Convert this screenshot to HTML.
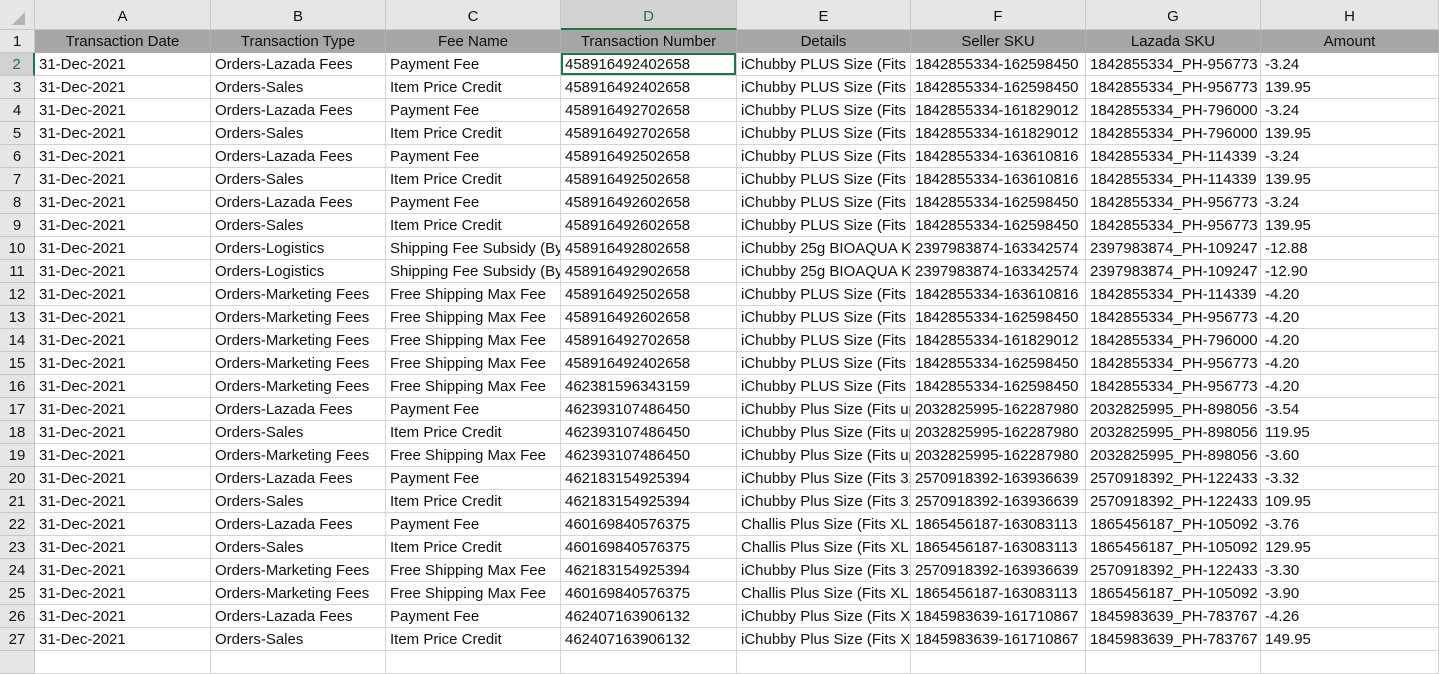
<!DOCTYPE html>
<html><head><meta charset="utf-8"><style>
body{margin:0;width:1439px;height:656px;overflow:hidden;background:#fff;font-family:"Liberation Sans",sans-serif;font-size:15px;color:#111}
.r{position:absolute;left:0;width:1439px;height:23px;display:flex}
.r div{box-sizing:border-box;height:23px;border-right:1px solid #d4d4d4;border-bottom:1px solid #d4d4d4;white-space:nowrap;overflow:hidden;padding:0 0 0 4px;line-height:23px}
.r div:nth-child(1){width:35px;background:#e6e6e6;text-align:center;padding:0;border-color:#c6c6c6}
.r div:nth-child(2){width:176px}.r div:nth-child(3){width:175px}.r div:nth-child(4){width:175px}.r div:nth-child(5){width:176px}.r div:nth-child(6){width:174px}.r div:nth-child(7){width:175px}.r div:nth-child(8){width:175px}.r div:nth-child(9){width:178px}
.ch{top:0;height:30px}.ch div{height:30px;line-height:34px;background:#e6e6e6;text-align:center;border-color:#c6c6c6;padding:0}
.ch div.sel{background:#d2d2d2;color:#217346;border-bottom:2px solid #217346}
.h div{background:#a6a6a6;text-align:center;border-color:#b0b0b0;padding:0}
.act{box-shadow:inset 0 0 0 2px #217346}
.rsel{color:#217346;background:#d2d2d2!important;border-right:2px solid #217346!important}
</style></head><body>
<div class="r ch"><div><svg width="34" height="30"><polygon points="25,12 25,25 12,25" fill="#b4b4b4"/></svg></div><div>A</div><div>B</div><div>C</div><div class="sel">D</div><div>E</div><div>F</div><div>G</div><div>H</div></div>
<div class="r h" style="top:30px"><div>1</div><div>Transaction Date</div><div>Transaction Type</div><div>Fee Name</div><div>Transaction Number</div><div>Details</div><div>Seller SKU</div><div>Lazada SKU</div><div>Amount</div></div>
<div class="r" style="top:53px"><div class="rsel">2</div><div>31-Dec-2021</div><div>Orders-Lazada Fees</div><div>Payment Fee</div><div class="act">458916492402658</div><div>iChubby PLUS Size (Fits up</div><div>1842855334-162598450</div><div>1842855334_PH-956773</div><div>-3.24</div></div>
<div class="r" style="top:76px"><div>3</div><div>31-Dec-2021</div><div>Orders-Sales</div><div>Item Price Credit</div><div>458916492402658</div><div>iChubby PLUS Size (Fits up</div><div>1842855334-162598450</div><div>1842855334_PH-956773</div><div>139.95</div></div>
<div class="r" style="top:99px"><div>4</div><div>31-Dec-2021</div><div>Orders-Lazada Fees</div><div>Payment Fee</div><div>458916492702658</div><div>iChubby PLUS Size (Fits up</div><div>1842855334-161829012</div><div>1842855334_PH-796000</div><div>-3.24</div></div>
<div class="r" style="top:122px"><div>5</div><div>31-Dec-2021</div><div>Orders-Sales</div><div>Item Price Credit</div><div>458916492702658</div><div>iChubby PLUS Size (Fits up</div><div>1842855334-161829012</div><div>1842855334_PH-796000</div><div>139.95</div></div>
<div class="r" style="top:145px"><div>6</div><div>31-Dec-2021</div><div>Orders-Lazada Fees</div><div>Payment Fee</div><div>458916492502658</div><div>iChubby PLUS Size (Fits up</div><div>1842855334-163610816</div><div>1842855334_PH-114339</div><div>-3.24</div></div>
<div class="r" style="top:168px"><div>7</div><div>31-Dec-2021</div><div>Orders-Sales</div><div>Item Price Credit</div><div>458916492502658</div><div>iChubby PLUS Size (Fits up</div><div>1842855334-163610816</div><div>1842855334_PH-114339</div><div>139.95</div></div>
<div class="r" style="top:191px"><div>8</div><div>31-Dec-2021</div><div>Orders-Lazada Fees</div><div>Payment Fee</div><div>458916492602658</div><div>iChubby PLUS Size (Fits up</div><div>1842855334-162598450</div><div>1842855334_PH-956773</div><div>-3.24</div></div>
<div class="r" style="top:214px"><div>9</div><div>31-Dec-2021</div><div>Orders-Sales</div><div>Item Price Credit</div><div>458916492602658</div><div>iChubby PLUS Size (Fits up</div><div>1842855334-162598450</div><div>1842855334_PH-956773</div><div>139.95</div></div>
<div class="r" style="top:237px"><div>10</div><div>31-Dec-2021</div><div>Orders-Logistics</div><div>Shipping Fee Subsidy (By</div><div>458916492802658</div><div>iChubby 25g BIOAQUA K</div><div>2397983874-163342574</div><div>2397983874_PH-109247</div><div>-12.88</div></div>
<div class="r" style="top:260px"><div>11</div><div>31-Dec-2021</div><div>Orders-Logistics</div><div>Shipping Fee Subsidy (By</div><div>458916492902658</div><div>iChubby 25g BIOAQUA K</div><div>2397983874-163342574</div><div>2397983874_PH-109247</div><div>-12.90</div></div>
<div class="r" style="top:283px"><div>12</div><div>31-Dec-2021</div><div>Orders-Marketing Fees</div><div>Free Shipping Max Fee</div><div>458916492502658</div><div>iChubby PLUS Size (Fits up</div><div>1842855334-163610816</div><div>1842855334_PH-114339</div><div>-4.20</div></div>
<div class="r" style="top:306px"><div>13</div><div>31-Dec-2021</div><div>Orders-Marketing Fees</div><div>Free Shipping Max Fee</div><div>458916492602658</div><div>iChubby PLUS Size (Fits up</div><div>1842855334-162598450</div><div>1842855334_PH-956773</div><div>-4.20</div></div>
<div class="r" style="top:329px"><div>14</div><div>31-Dec-2021</div><div>Orders-Marketing Fees</div><div>Free Shipping Max Fee</div><div>458916492702658</div><div>iChubby PLUS Size (Fits up</div><div>1842855334-161829012</div><div>1842855334_PH-796000</div><div>-4.20</div></div>
<div class="r" style="top:352px"><div>15</div><div>31-Dec-2021</div><div>Orders-Marketing Fees</div><div>Free Shipping Max Fee</div><div>458916492402658</div><div>iChubby PLUS Size (Fits up</div><div>1842855334-162598450</div><div>1842855334_PH-956773</div><div>-4.20</div></div>
<div class="r" style="top:375px"><div>16</div><div>31-Dec-2021</div><div>Orders-Marketing Fees</div><div>Free Shipping Max Fee</div><div>462381596343159</div><div>iChubby PLUS Size (Fits up</div><div>1842855334-162598450</div><div>1842855334_PH-956773</div><div>-4.20</div></div>
<div class="r" style="top:398px"><div>17</div><div>31-Dec-2021</div><div>Orders-Lazada Fees</div><div>Payment Fee</div><div>462393107486450</div><div>iChubby Plus Size (Fits up</div><div>2032825995-162287980</div><div>2032825995_PH-898056</div><div>-3.54</div></div>
<div class="r" style="top:421px"><div>18</div><div>31-Dec-2021</div><div>Orders-Sales</div><div>Item Price Credit</div><div>462393107486450</div><div>iChubby Plus Size (Fits up</div><div>2032825995-162287980</div><div>2032825995_PH-898056</div><div>119.95</div></div>
<div class="r" style="top:444px"><div>19</div><div>31-Dec-2021</div><div>Orders-Marketing Fees</div><div>Free Shipping Max Fee</div><div>462393107486450</div><div>iChubby Plus Size (Fits up</div><div>2032825995-162287980</div><div>2032825995_PH-898056</div><div>-3.60</div></div>
<div class="r" style="top:467px"><div>20</div><div>31-Dec-2021</div><div>Orders-Lazada Fees</div><div>Payment Fee</div><div>462183154925394</div><div>iChubby Plus Size (Fits 3X</div><div>2570918392-163936639</div><div>2570918392_PH-122433</div><div>-3.32</div></div>
<div class="r" style="top:490px"><div>21</div><div>31-Dec-2021</div><div>Orders-Sales</div><div>Item Price Credit</div><div>462183154925394</div><div>iChubby Plus Size (Fits 3X</div><div>2570918392-163936639</div><div>2570918392_PH-122433</div><div>109.95</div></div>
<div class="r" style="top:513px"><div>22</div><div>31-Dec-2021</div><div>Orders-Lazada Fees</div><div>Payment Fee</div><div>460169840576375</div><div>Challis Plus Size (Fits XL to</div><div>1865456187-163083113</div><div>1865456187_PH-105092</div><div>-3.76</div></div>
<div class="r" style="top:536px"><div>23</div><div>31-Dec-2021</div><div>Orders-Sales</div><div>Item Price Credit</div><div>460169840576375</div><div>Challis Plus Size (Fits XL to</div><div>1865456187-163083113</div><div>1865456187_PH-105092</div><div>129.95</div></div>
<div class="r" style="top:559px"><div>24</div><div>31-Dec-2021</div><div>Orders-Marketing Fees</div><div>Free Shipping Max Fee</div><div>462183154925394</div><div>iChubby Plus Size (Fits 3X</div><div>2570918392-163936639</div><div>2570918392_PH-122433</div><div>-3.30</div></div>
<div class="r" style="top:582px"><div>25</div><div>31-Dec-2021</div><div>Orders-Marketing Fees</div><div>Free Shipping Max Fee</div><div>460169840576375</div><div>Challis Plus Size (Fits XL to</div><div>1865456187-163083113</div><div>1865456187_PH-105092</div><div>-3.90</div></div>
<div class="r" style="top:605px"><div>26</div><div>31-Dec-2021</div><div>Orders-Lazada Fees</div><div>Payment Fee</div><div>462407163906132</div><div>iChubby Plus Size (Fits XL</div><div>1845983639-161710867</div><div>1845983639_PH-783767</div><div>-4.26</div></div>
<div class="r" style="top:628px"><div>27</div><div>31-Dec-2021</div><div>Orders-Sales</div><div>Item Price Credit</div><div>462407163906132</div><div>iChubby Plus Size (Fits XL</div><div>1845983639-161710867</div><div>1845983639_PH-783767</div><div>149.95</div></div>
<div class="r" style="top:651px"><div></div><div></div><div></div><div></div><div></div><div></div><div></div><div></div><div></div></div>
</body></html>
